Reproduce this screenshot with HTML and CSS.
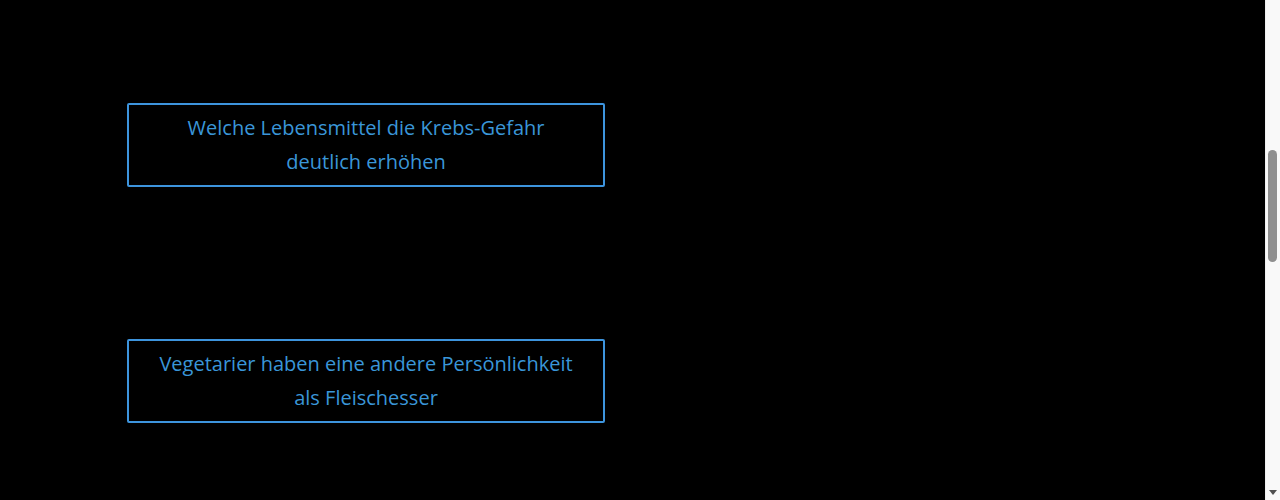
FILE: index.html
```html
<!DOCTYPE html>
<html lang="de">
<head>
<meta charset="utf-8">
<title>Artikel</title>
<link rel="stylesheet" href="styles.css">
</head>
<body>
<main class="list">
  <a class="teaser" href="#">Welche Lebensmittel die Krebs-Gefahr deutlich erhöhen</a>
  <a class="teaser" href="#">Vegetarier haben eine andere Persönlichkeit als Fleischesser</a>
</main>
<div class="scrollbar" aria-hidden="true">
  <div class="scrollbar-thumb"></div>
  <div class="scrollbar-arrow"></div>
</div>
</body>
</html>
```
FILE: styles.css
```css
html, body {
  margin: 0;
  background: #000;
}
body {
  font-family: "Open Sans", "Noto Sans", sans-serif;
  overflow: hidden;
}
.list {
  display: flex;
  flex-direction: column;
  align-items: flex-start;
  gap: 152px;
  padding: 103px 0 78px 127px;
}
.teaser {
  box-sizing: border-box;
  width: 478px;
  height: 84px;
  padding: 6px 25px;
  border: 2px solid #3d94dd;
  border-radius: 2px;
  color: #3a96d8;
  font-size: 20px;
  line-height: 34px;
  text-align: center;
  text-decoration: none;
}
.scrollbar {
  position: fixed;
  top: 0;
  right: 0;
  width: 15px;
  height: 100%;
  background: #f9f9f9;
  border-left: 1px solid #efefef;
  box-sizing: border-box;
}
.scrollbar-thumb {
  position: absolute;
  top: 150px;
  left: 2px;
  width: 9px;
  height: 112px;
  border-radius: 5px;
  background: #8f8f8f;
}
.scrollbar-arrow {
  position: absolute;
  bottom: 5px;
  left: 3px;
  width: 0;
  height: 0;
  border-left: 4px solid transparent;
  border-right: 4px solid transparent;
  border-top: 5px solid #505050;
}
```
